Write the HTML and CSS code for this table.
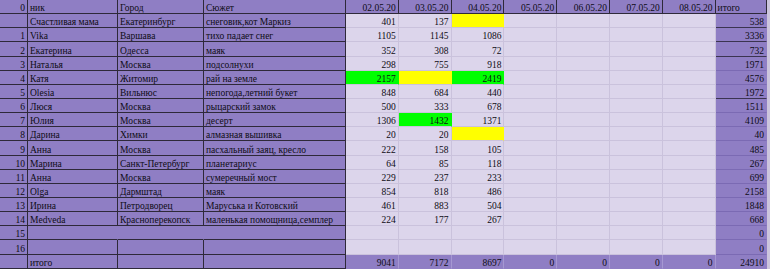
FILE: index.html
```html
<!DOCTYPE html>
<html lang="ru">
<head>
<meta charset="utf-8">
<title>Таблица</title>
<link rel="stylesheet" href="styles.css">
</head>
<body>
<table class="sheet">
<colgroup>
<col class="c-idx"><col class="c-nick"><col class="c-city"><col class="c-plot">
<col class="c-date"><col class="c-date"><col class="c-date"><col class="c-date"><col class="c-date"><col class="c-date"><col class="c-date">
<col class="c-sum"><col class="c-strip">
</colgroup>
<tr class="head"><td>0</td><td>ник</td><td>Город</td><td>Сюжет</td><td>02.05.20</td><td>03.05.20</td><td>04.05.20</td><td>05.05.20</td><td>06.05.20</td><td>07.05.20</td><td>08.05.20</td><td>итого</td><td></td></tr>
<tr class="row tk"><td></td><td>Счастливая мама</td><td>Екатеринбург</td><td>снеговик,кот Маркиз</td><td>401</td><td>137</td><td class="yel"></td><td></td><td></td><td></td><td></td><td>538</td><td></td></tr>
<tr class="row tk"><td>1</td><td>Vika</td><td>Варшава</td><td>тихо падает снег</td><td>1105</td><td>1145</td><td>1086</td><td></td><td></td><td></td><td></td><td>3336</td><td></td></tr>
<tr class="row tk"><td>2</td><td>Екатерина</td><td>Одесса</td><td>маяк</td><td>352</td><td>308</td><td>72</td><td></td><td></td><td></td><td></td><td>732</td><td></td></tr>
<tr class="row"><td>3</td><td>Наталья</td><td>Москва</td><td>подсолнухи</td><td>298</td><td>755</td><td>918</td><td></td><td></td><td></td><td></td><td>1971</td><td></td></tr>
<tr class="row"><td>4</td><td>Катя</td><td>Житомир</td><td>рай на земле</td><td class="grn">2157</td><td class="yel"></td><td class="grn">2419</td><td></td><td></td><td></td><td></td><td>4576</td><td></td></tr>
<tr class="row tk"><td>5</td><td>Olesia</td><td>Вильнюс</td><td>непогода,летний букет</td><td>848</td><td>684</td><td>440</td><td></td><td></td><td></td><td></td><td>1972</td><td></td></tr>
<tr class="row"><td>6</td><td>Люся</td><td>Москва</td><td>рыцарский замок</td><td>500</td><td>333</td><td>678</td><td></td><td></td><td></td><td></td><td>1511</td><td></td></tr>
<tr class="row"><td>7</td><td>Юлия</td><td>Москва</td><td>десерт</td><td>1306</td><td class="grn">1432</td><td>1371</td><td></td><td></td><td></td><td></td><td>4109</td><td></td></tr>
<tr class="row"><td>8</td><td>Дарина</td><td>Химки</td><td>алмазная вышивка</td><td>20</td><td>20</td><td class="yel"></td><td></td><td></td><td></td><td></td><td>40</td><td></td></tr>
<tr class="row"><td>9</td><td>Анна</td><td>Москва</td><td>пасхальный заяц, кресло</td><td>222</td><td>158</td><td>105</td><td></td><td></td><td></td><td></td><td>485</td><td></td></tr>
<tr class="row"><td>10</td><td>Марина</td><td>Санкт-Петербург</td><td>планетариус</td><td>64</td><td>85</td><td>118</td><td></td><td></td><td></td><td></td><td>267</td><td></td></tr>
<tr class="row"><td>11</td><td>Анна</td><td>Москва</td><td>сумеречный мост</td><td>229</td><td>237</td><td>233</td><td></td><td></td><td></td><td></td><td>699</td><td></td></tr>
<tr class="row"><td>12</td><td>Olga</td><td>Дармштад</td><td>маяк</td><td>854</td><td>818</td><td>486</td><td></td><td></td><td></td><td></td><td>2158</td><td></td></tr>
<tr class="row"><td>13</td><td>Ирина</td><td>Петродворец</td><td>Маруська и Котовский</td><td>461</td><td>883</td><td>504</td><td></td><td></td><td></td><td></td><td>1848</td><td></td></tr>
<tr class="row"><td>14</td><td>Medveda</td><td>Красноперекопск</td><td>маленькая помощница,семплер</td><td>224</td><td>177</td><td>267</td><td></td><td></td><td></td><td></td><td>668</td><td></td></tr>
<tr class="row open"><td>15</td><td></td><td></td><td></td><td></td><td></td><td></td><td></td><td></td><td></td><td></td><td>0</td><td></td></tr>
<tr class="row"><td>16</td><td></td><td></td><td></td><td></td><td></td><td></td><td></td><td></td><td></td><td></td><td>0</td><td></td></tr>
<tr class="total"><td></td><td>итого</td><td></td><td></td><td>9041</td><td>7172</td><td>8697</td><td>0</td><td>0</td><td>0</td><td>0</td><td>24910</td><td></td></tr>
</table>
</body>
</html>
```
FILE: styles.css
```css
html, body {
  margin: 0;
  padding: 0;
  background: #dcd5eb;
}

.sheet {
  width: 770px;
  table-layout: fixed;
  border-collapse: separate;
  border-spacing: 0;
  font-family: "Liberation Serif", "Times New Roman", serif;
  font-size: 9.5px;
  color: #0e0c14;
}

.c-idx { width: 28px; }
.c-nick { width: 90px; }
.c-city { width: 86px; }
.c-plot { width: 142px; }
.c-date { width: 52.8px; }
.c-sum { width: 51.4px; }
.c-strip { width: 3px; }

.sheet tr {
  height: 14.15px;
}

.sheet td {
  box-sizing: border-box;
  padding: 0 2px;
  line-height: 10px;
  vertical-align: bottom;
  white-space: nowrap;
  overflow: hidden;
  text-align: right;
  background: #dcd5eb;
  border-right: 1px solid #cac2dc;
  border-bottom: 1px solid #cac2dc;
}

.sheet td:nth-child(2),
.sheet td:nth-child(3),
.sheet td:nth-child(4) {
  text-align: left;
}

/* header row */
.head td {
  background: #8f7ec4;
  border-right-color: #2e2939;
  border-bottom-color: #2e2939;
}
.head td:nth-child(12) {
  text-align: left;
}

/* body rows: left block purple with dark grid */
.row td:nth-child(-n+4) {
  background: #8f7ec4;
  border-right-color: #2e2939;
  border-bottom-color: #2e2939;
}
.row td:nth-child(12) {
  background: #8f7ec4;
  border-right-color: #8f7ec4;
  border-bottom-color: #7b6ab3;
}
.row.tk td:nth-child(12) {
  border-bottom-color: #3b3450;
}
.row.open td:nth-child(2),
.row.open td:nth-child(3) {
  border-right-color: #8f7ec4;
}

/* totals row */
.total td {
  background: #8f7ec4;
  border-right-color: #a598d2;
  border-bottom-color: #8f7ec4;
}
.total td:nth-child(-n+4) {
  border-right-color: #2e2939;
  border-bottom-color: #2e2939;
}
.total td:nth-child(12) {
  border-right-color: #8f7ec4;
}

/* scrollbar strip at the right edge */
.sheet td:nth-child(13) {
  padding: 0;
  background: #ccc5dd;
  border-right: 0;
  border-bottom-color: #ccc5dd;
}

/* highlighted cells */
.sheet .grn {
  background: #00ff00;
  border-right-color: #00ff00;
}
.sheet .yel {
  background: #ffff00;
  border-right-color: #ffff00;
}
```
